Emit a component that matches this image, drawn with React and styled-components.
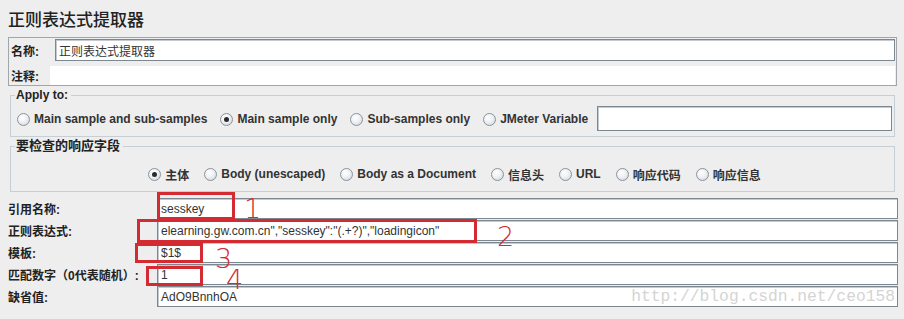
import React from 'react';
import styled, { createGlobalStyle } from 'styled-components';

const GlobalStyle = createGlobalStyle`
  body {
    margin: 0;
    background: #eeeeee;
    font-family: "Liberation Sans", "Noto Sans CJK SC", sans-serif;
    color: #333333;
  }
`;

const Page = styled.div`
  position: relative;
  width: 904px;
  height: 319px;
  padding: 0 7px 0 8px;
  box-sizing: border-box;
  overflow: hidden;
`;

const Title = styled.h1`
  margin: 0;
  padding-top: 9px;
  height: 28px;
  box-sizing: border-box;
  font-family: "Noto Sans CJK SC", sans-serif;
  font-size: 17px;
  line-height: 20px;
  font-weight: 500;
  color: #222;
`;

const NamePanel = styled.div`
  margin-top: 9px;
  border: 1px solid #a2a6aa;
  padding: 1px 1px 0 1px;
  display: flex;
  flex-direction: column;
  gap: 5px;
`;

const NameRow = styled.div`
  display: flex;
  align-items: center;
  height: ${p => p.$h}px;
`;

const Label = styled.span`
  font-family: "Liberation Sans", "Noto Sans CJK SC", sans-serif;
  font-size: 12px;
  font-weight: bold;
  color: #222;
  width: ${p => p.$w}px;
  flex: none;
  padding-left: ${p => p.$pl || 0}px;
  box-sizing: border-box;
  white-space: nowrap;
`;

const TextInput = styled.div`
  flex: 1;
  height: ${p => p.$h || 22}px;
  box-sizing: border-box;
  background: #fff;
  border: 1px solid #7d8790;
  box-shadow: inset 1px 1px 0 #c4cad0;
  font-family: "Liberation Sans", "Noto Sans CJK SC", sans-serif;
  font-size: 12px;
  color: #333;
  display: flex;
  align-items: center;
  padding-left: 3px;
  white-space: nowrap;
  overflow: hidden;
  position: relative;
`;

const VarInput = styled(TextInput)`
  margin-left: -4px;
  margin-bottom: 2px;
`;

const BareArea = styled.div`
  flex: 1;
  height: 19px;
  background: #fff;
`;

const Group = styled.fieldset`
  margin: ${p => p.$mt}px 2px 0 2px;
  padding: 0 2px 0 6px;
  border: 1px solid #c6ced6;
  min-width: 0;
  height: ${p => p.$h}px;
  box-sizing: border-box;
  display: flex;
  align-items: center;
  justify-content: ${p => (p.$center ? 'center' : 'flex-start')};
`;

const Legend = styled.legend`
  font-family: "Liberation Sans", "Noto Sans CJK SC", sans-serif;
  font-size: ${p => p.$size}px;
  font-weight: bold;
  color: #222;
  padding: 0 3px 0 1px;
  margin-left: -2px;
  line-height: 14px;
`;

const RadioRow = styled.div`
  display: flex;
  align-items: center;
  gap: ${p => p.$gap}px;
  width: ${p => (p.$fill ? '100%' : 'auto')};
  padding-top: ${p => p.$pt || 0}px;
`;

const Option = styled.label`
  display: flex;
  align-items: center;
  gap: 4px;
  font-family: "Liberation Sans", "Noto Sans CJK SC", sans-serif;
  font-size: 12px;
  font-weight: bold;
  color: #333;
  white-space: nowrap;
`;

const Dot = styled.span`
  width: 13px;
  height: 13px;
  border-radius: 50%;
  box-sizing: border-box;
  border: 1px solid #8b939b;
  background: radial-gradient(circle at 40% 35%, #ffffff 0%, #eef1f4 45%, #c9d0d7 100%);
  display: flex;
  align-items: center;
  justify-content: center;
  &::after {
    content: '';
    width: 5px;
    height: 5px;
    border-radius: 50%;
    background: ${p => (p.$on ? '#2a2a2a' : 'transparent')};
  }
`;

const FieldList = styled.div`
  margin-top: 6px;
  margin-right: -1px;
  display: flex;
  flex-direction: column;
  gap: 1px;
`;

const FieldRow = styled.div`
  display: flex;
  align-items: center;
  height: 21px;
`;

const Watermark = styled.span`
  position: absolute;
  right: 2px;
  bottom: 0px;
  font-family: "Liberation Mono", monospace;
  font-size: 16.3px;
  color: #d4d4d4;
  line-height: 19px;
`;

const Mark = styled.div`
  position: absolute;
  left: ${p => p.$x}px;
  top: ${p => p.$y}px;
  width: ${p => p.$w}px;
  height: ${p => p.$h}px;
  border: 3px solid #d42a31;
  box-sizing: border-box;
`;

const Num = styled.span`
  position: absolute;
  left: ${p => p.$x}px;
  top: ${p => p.$y}px;
  font-family: "DejaVu Sans", sans-serif;
  font-weight: 200;
  font-size: 27px;
  line-height: 27px;
  color: #d42a31;
`;

const applyOptions = [
  { t: 'Main sample and sub-samples' },
  { t: 'Main sample only', on: true },
  { t: 'Sub-samples only' },
  { t: 'JMeter Variable' },
];

const fieldOptions = [
  { t: '主体', on: true },
  { t: 'Body (unescaped)' },
  { t: 'Body as a Document' },
  { t: '信息头' },
  { t: 'URL' },
  { t: '响应代码' },
  { t: '响应信息' },
];

const fields = [
  { label: '引用名称:', value: 'sesskey' },
  { label: '正则表达式:', value: 'elearning.gw.com.cn","sesskey":"(.+?)","loadingicon"' },
  { label: '模板:', value: '$1$' },
  { label: '匹配数字（0代表随机）:', value: '1' },
  { label: '缺省值:', value: 'AdO9BnnhOA', mark: true },
];

export default function App() {
  return (
    <Page>
      <GlobalStyle />
      <Title>正则表达式提取器</Title>
      <NamePanel>
        <NameRow $h={22}>
          <Label $w={45} $pl={1}>名称:</Label>
          <TextInput>正则表达式提取器</TextInput>
        </NameRow>
        <NameRow $h={19}>
          <Label $w={40} $pl={1}>注释:</Label>
          <BareArea />
        </NameRow>
      </NamePanel>

      <Group $mt={2} $h={49}>
        <Legend $size={12}>Apply to:</Legend>
        <RadioRow $gap={13} $fill>
          {applyOptions.map(o => (
            <Option key={o.t}><Dot $on={o.on} />{o.t}</Option>
          ))}
          <VarInput $h={25} />
        </RadioRow>
      </Group>

      <Group $mt={2} $h={53} $center>
        <Legend $size={13}>要检查的响应字段</Legend>
        <RadioRow $gap={15} $pt={4}>
          {fieldOptions.map(o => (
            <Option key={o.t}><Dot $on={o.on} />{o.t}</Option>
          ))}
        </RadioRow>
      </Group>

      <FieldList>
        {fields.map(f => (
          <FieldRow key={f.label}>
            <Label $w={149}>{f.label}</Label>
            <TextInput $h={21}>
              {f.value}
              {f.mark && <Watermark>http://blog.csdn.net/ceo158</Watermark>}
            </TextInput>
          </FieldRow>
        ))}
      </FieldList>

      <Mark $x={157} $y={192} $w={78} $h={28} />
      <Num $x={244} $y={195}>1</Num>
      <Mark $x={137} $y={219} $w={340} $h={24} />
      <Num $x={497} $y={223}>2</Num>
      <Mark $x={135} $y={243} $w={68} $h={20} />
      <Num $x={215} $y={245}>3</Num>
      <Mark $x={146} $y={266} $w={57} $h={20} />
      <Num $x={226} $y={266}>4</Num>
    </Page>
  );
}
